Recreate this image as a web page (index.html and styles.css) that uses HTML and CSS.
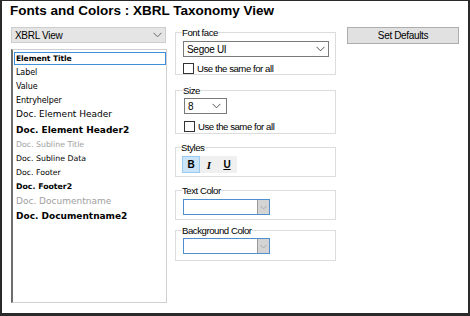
FILE: index.html
```html
<!DOCTYPE html>
<html>
<head>
<meta charset="utf-8">
<link rel="stylesheet" href="styles.css">
</head>
<body>
<div class="frame">
  <h1 class="title">Fonts and Colors : XBRL Taxonomy View</h1>
  <div class="content">
    <div class="left">
      <div class="combo gray">
        <span>XBRL View</span>
        <svg class="chev" width="9" height="6" viewBox="0 0 9 6"><path d="M0.5 0.8 L4.5 4.8 L8.5 0.8" fill="none" stroke="#666" stroke-width="1"/></svg>
      </div>
      <div class="listbox">
        <div class="item sel t">Element Title</div>
        <div class="item t">Label</div>
        <div class="item t">Value</div>
        <div class="item t">Entryhelper</div>
        <div class="item big">Doc. Element Header</div>
        <div class="item big b">Doc. Element Header2</div>
        <div class="item sm gr">Doc. Subline Title</div>
        <div class="item sm">Doc. Subline Data</div>
        <div class="item sm">Doc. Footer</div>
        <div class="item sm b">Doc. Footer2</div>
        <div class="item med gr">Doc. Documentname</div>
        <div class="item med b">Doc. Documentname2</div>
      </div>
    </div>
    <div class="mid">
      <fieldset class="grp g-font">
        <legend>Font face</legend>
        <div class="combo wide">
          <span>Segoe UI</span>
          <svg class="chev" width="9" height="6" viewBox="0 0 9 6"><path d="M0.5 0.8 L4.5 4.8 L8.5 0.8" fill="none" stroke="#555" stroke-width="1"/></svg>
        </div>
        <label class="chk"><span class="box"></span>Use the same for all</label>
      </fieldset>
      <fieldset class="grp g-size">
        <legend>Size</legend>
        <div class="combo small">
          <span>8</span>
          <svg class="chev" width="9" height="6" viewBox="0 0 9 6"><path d="M0.5 0.8 L4.5 4.8 L8.5 0.8" fill="none" stroke="#555" stroke-width="1"/></svg>
        </div>
        <label class="chk"><span class="box"></span>Use the same for all</label>
      </fieldset>
      <fieldset class="grp g-styles">
        <legend>Styles</legend>
        <div class="toolbar">
          <span class="tb on bold">B</span>
          <span class="tb ital">I</span>
          <span class="tb und">U</span>
        </div>
      </fieldset>
      <fieldset class="grp g-color">
        <legend>Text Color</legend>
        <div class="cpick"><span class="cval"></span><span class="cbtn"><svg width="7" height="5" viewBox="0 0 7 5"><path d="M0.5 1 L3.5 4 L6.5 1" fill="none" stroke="#aaa" stroke-width="1"/></svg></span></div>
      </fieldset>
      <fieldset class="grp g-bg">
        <legend>Background Color</legend>
        <div class="cpick"><span class="cval"></span><span class="cbtn"><svg width="7" height="5" viewBox="0 0 7 5"><path d="M0.5 1 L3.5 4 L6.5 1" fill="none" stroke="#aaa" stroke-width="1"/></svg></span></div>
      </fieldset>
    </div>
    <div class="right">
      <div class="btn">Set Defaults</div>
    </div>
  </div>
</div>
</body>
</html>
```
FILE: styles.css
```css
* { box-sizing: border-box; }
html, body { margin: 0; padding: 0; background: #fff; }
body { font-family: "Liberation Sans", Arial, sans-serif; color: #000; }
.frame {
  width: 470px; height: 316px;
  border: 2px solid #2a2a2a; border-top-width: 1px; border-bottom-width: 3px;
  padding: 2px 0 0 8px;
  background: #fff;
}
.title {
  margin: 0; font-size: 13.5px; font-weight: bold; line-height: 16px;
  font-family: "Liberation Sans", Arial, sans-serif;
  padding-left: 0;
}
.content { display: flex; margin-top: 8px; }
.left { width: 157px; }
.mid { width: 161px; margin-left: 8px; }
.right { margin-left: 11px; }

.combo {
  height: 16px; border: 1px solid #7a7a7a; background: #fff;
  display: flex; align-items: center; justify-content: space-between;
  padding: 0 3px 0 3px; font-size: 10px; letter-spacing: -0.3px;
}
.combo.gray { background: #e5e5e5; border-color: #cdcdcd; width: 155px; margin-left: 1px; }
.combo.wide { width: 146px; }
.combo.small { width: 43px; padding-right: 5px; }

.listbox {
  margin-top: 6px; margin-left: 1px; width: 156px; height: 254px;
  border: 1px solid #d0d0d0; border-left: 2px solid #6d6d6d;
  padding: 2px 0 0 1px;
  font-family: "DejaVu Sans", Tahoma, sans-serif;
}
.item { padding-left: 2px; white-space: nowrap; }
.item.t { font-size: 8px; height: 13.8px; line-height: 13px; letter-spacing: -0.1px; }
.item.sel { border: 1px solid #3c8fd8; line-height: 11px; height: 13px; margin-bottom: 1px; padding-left: 1px; font-weight: bold; font-size: 7.6px; }
.item.big { font-size: 9px; height: 15.5px; line-height: 15px; }
.item.sm { font-size: 7.8px; height: 13.8px; line-height: 14px; }
.item.med { font-size: 9px; height: 15.5px; line-height: 15px; }
.item.b { font-weight: bold; }
.item.gr { color: #a0a0a0; }

.grp {
  margin: 0; padding: 0 0 0 7px;
  border: 1px solid #dcdcdc;
  min-width: 0;
}
.grp legend {
  padding: 0; margin-left: -1px;
  font-size: 9.6px; letter-spacing: -0.45px; line-height: 11px; color: #000;
}
.g-font { height: 48px; padding-top: 3px; }
.g-size { height: 49px; margin-top: 10px; padding-top: 2px; padding-left: 8px; }
.g-styles { height: 35px; margin-top: 8px; padding-top: 3px; padding-left: 6px; }
.g-color { height: 35px; margin-top: 8px; padding-top: 3px; }
.g-bg { height: 36px; margin-top: 5px; padding-top: 2px; }

.chk { display: flex; align-items: center; margin-top: 6px; font-size: 9.6px; letter-spacing: -0.45px; height: 11px; }
.g-size .chk { margin-top: 7px; }
.box { width: 11px; height: 11px; border: 1px solid #333; background: #fff; margin: 0 3px 0 0; flex: none; }

.toolbar { display: flex; width: 55px; height: 17px; background: #f0f0f0; }
.tb { width: 18px; height: 17px; display: flex; align-items: center; justify-content: center; font-size: 10px; font-weight: bold; }
.tb.on { background: #cce4f7; border: 1px solid #99c9ef; }
.tb.ital { font-style: italic; font-family: "Liberation Serif", serif; font-size: 11px; }
.tb.und { text-decoration: underline; }

.cpick { display: flex; width: 87px; height: 16px; border: 1px solid #4f8fd0; }
.cval { flex: 1; background: #fff; border-right: 1px solid #999; }
.cbtn { width: 11px; background: #d4d4d4; display: flex; align-items: center; justify-content: center; }

.btn {
  width: 112px; height: 17px; background: #e1e1e1; border: 1px solid #adadad;
  font-size: 10px; letter-spacing: -0.35px; display: flex; align-items: center; justify-content: center;
}
```
